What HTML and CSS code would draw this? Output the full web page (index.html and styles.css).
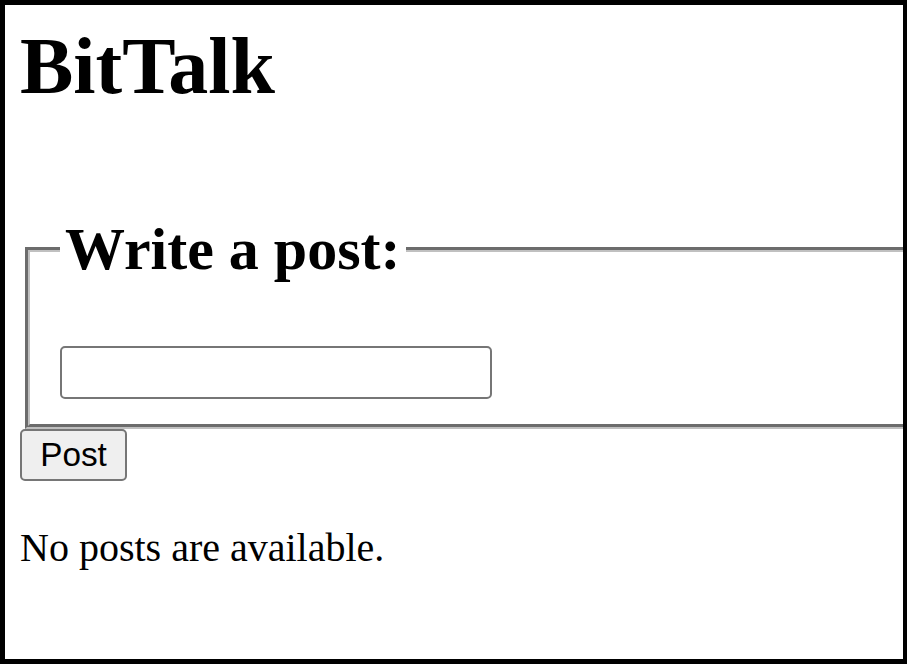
FILE: index.html
```html
<!DOCTYPE html>
<html lang="en">
<head>
<meta charset="utf-8">
<title>BitTalk</title>
<link rel="stylesheet" href="styles.css">
</head>
<body>
<div class="page">
  <h1 class="site-title">BitTalk</h1>
  <form class="compose">
    <fieldset class="compose-box">
      <legend class="compose-legend">Write a post:</legend>
      <input class="compose-input" type="text" aria-label="Post text">
    </fieldset>
    <button class="compose-button" type="submit">Post</button>
  </form>
  <p class="empty-note">No posts are available.</p>
</div>
</body>
</html>
```
FILE: styles.css
```css
html, body {
  margin: 0;
  padding: 0;
  background: #ffffff;
}

.page {
  box-sizing: border-box;
  width: 907px;
  height: 664px;
  border-style: solid;
  border-color: #000000;
  border-width: 5px 4px 5px 5px;
  padding: 15px 0 0 15px;
  overflow: hidden;
  font-family: "Liberation Serif", "Times New Roman", serif;
  font-size: 40px;
  line-height: 46px;
  color: #000000;
}

.site-title {
  margin: 0 0 54px 0;
  font-size: 80px;
  line-height: 92px;
  font-weight: bold;
}

.compose {
  margin: 0;
}

.compose-box {
  box-sizing: border-box;
  width: 1200px;
  margin: 0 0 0 5px;
  padding: 14px 30px 25px 30px;
  border: 5px groove #c0c0c0;
}

.compose-legend {
  padding: 49px 5px 48px 5px;
  font-size: 60px;
  line-height: 69px;
  font-weight: bold;
}

.compose-input {
  display: block;
  box-sizing: border-box;
  width: 432px;
  height: 53px;
  margin: 0;
  padding: 2px 5px;
  border: 2px solid #767676;
  border-radius: 5px;
  background: #ffffff;
  font-family: "Liberation Sans", Arial, sans-serif;
  font-size: 33px;
}

.compose-button {
  display: block;
  box-sizing: border-box;
  width: 107px;
  height: 52px;
  margin: 0;
  padding: 0;
  border: 2px solid #767676;
  border-radius: 5px;
  background: #efefef;
  color: #000000;
  font-family: "Liberation Sans", Arial, sans-serif;
  font-size: 33.3px;
  line-height: 1;
}

.empty-note {
  margin: 44px 0 0 0;
}
```
